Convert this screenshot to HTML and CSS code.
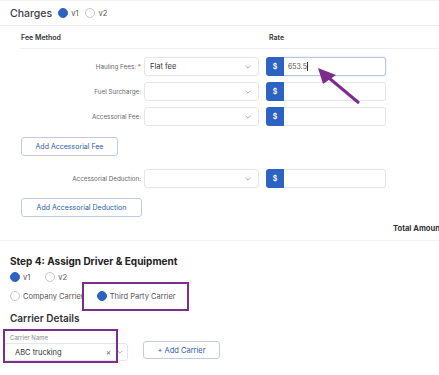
FILE: index.html
```html
<!DOCTYPE html>
<html lang="en">
<head>
    <meta charset="UTF-8">
    <meta name="viewport" content="width=device-width, initial-scale=1.0">
    <title>Load charges</title>
    <link rel="stylesheet" href="styles.css">
</head>
<body>
    <div class="page">
        <div class="charges-head">
            <span class="section-title">Charges</span>
            <label class="radio"><span class="dot on"></span>v1</label>
            <label class="radio"><span class="dot"></span>v2</label>
        </div>

        <div class="fee-head">
            <span class="col-method">Fee Method</span>
            <span class="col-rate">Rate</span>
        </div>

        <div class="fee-rows">
            <div class="fee-row">
                <span class="fee-label">Hauling Fees: <i class="req">*</i></span>
                <div class="select"><span>Flat fee</span><svg class="chev" viewBox="0 0 10 6"><path d="M1 1l4 4 4-4"/></svg></div>
                <div class="rate">
                    <span class="addon">$</span>
                    <span class="rate-input focused">653.5<span class="caret"></span></span>
                </div>
            </div>
            <div class="fee-row">
                <span class="fee-label">Fuel Surcharge:</span>
                <div class="select"><span></span><svg class="chev" viewBox="0 0 10 6"><path d="M1 1l4 4 4-4"/></svg></div>
                <div class="rate">
                    <span class="addon">$</span>
                    <span class="rate-input"></span>
                </div>
            </div>
            <div class="fee-row">
                <span class="fee-label">Accessorial Fee:</span>
                <div class="select"><span></span><svg class="chev" viewBox="0 0 10 6"><path d="M1 1l4 4 4-4"/></svg></div>
                <div class="rate">
                    <span class="addon">$</span>
                    <span class="rate-input"></span>
                </div>
            </div>
        </div>

        <button class="btn-outline btn-fee">Add Accessorial Fee</button>

        <div class="fee-row deduction">
            <span class="fee-label">Accessorial Deduction:</span>
            <div class="select"><span></span><svg class="chev" viewBox="0 0 10 6"><path d="M1 1l4 4 4-4"/></svg></div>
            <div class="rate">
                <span class="addon">$</span>
                <span class="rate-input"></span>
            </div>
        </div>

        <button class="btn-outline btn-deduction">Add Accessorial Deduction</button>

        <div class="total-row">Total Amount</div>

        <div class="step">
            <h3 class="step-title">Step 4: Assign Driver &amp; Equipment</h3>
            <div class="radio-row versions">
                <label class="radio"><span class="dot on"></span>v1</label>
                <label class="radio"><span class="dot"></span>v2</label>
            </div>
            <div class="radio-row carrier-type">
                <label class="radio"><span class="dot"></span>Company Carrier</label>
                <label class="radio third"><span class="dot on"></span>Third Party Carrier</label>
            </div>
            <h4 class="details-title">Carrier Details</h4>
            <div class="carrier-row">
                <div class="carrier-field">
                    <span class="field-label">Carrier Name</span>
                    <div class="carrier-input">
                        <span class="carrier-value">ABC trucking</span>
                        <span class="clear">×</span>
                        <svg class="chev" viewBox="0 0 10 6"><path d="M1 1l4 4 4-4"/></svg>
                    </div>
                </div>
                <button class="btn-outline btn-carrier">+ Add Carrier</button>
            </div>
        </div>

        <!-- annotation overlays -->
        <div class="mark mark-third"></div>
        <div class="mark mark-carrier"></div>
        <svg class="arrow" viewBox="0 0 439 375">
            <line x1="359" y1="103" x2="323" y2="73"/>
            <polygon points="318,68 336,75 323,84"/>
        </svg>
    </div>
</body>
</html>
```

FILE: styles.css
```css
body {
    margin: 0;
    background: #fff;
    font-family: "Inter", "DejaVu Sans", sans-serif;
    color: #333;
    overflow: hidden;
}
.page {
    position: relative;
    width: 439px;
    height: 375px;
    overflow: hidden;
}
.charges-head {
    display: flex;
    align-items: center;
    height: 26px;
    padding-left: 10px;
    border-top: 1px solid #f1f2f5;
    border-bottom: 1px solid #eceef2;
    box-sizing: border-box;
}
.section-title {
    font-size: 10.5px;
    font-weight: 500;
    color: #3a3d44;
    margin-right: 6px;
}
.radio {
    display: inline-flex;
    align-items: center;
    font-size: 7.5px;
    color: #555;
    margin-right: 7px;
}
.dot {
    width: 8px;
    height: 8px;
    border: 1px solid #c4c7cc;
    border-radius: 50%;
    margin-right: 3px;
    background: #fff;
}
.dot.on {
    background: #2c63c3;
    border-color: #2c63c3;
}
.fee-head {
    display: flex;
    align-items: center;
    height: 22px;
    margin-left: 20px;
    border-bottom: 1px solid #eceef2;
    font-size: 7px;
    font-weight: 600;
    color: #333;
}
.col-method {
    width: 248px;
    padding-left: 1px;
}
.fee-rows {
    margin-top: 8px;
    display: flex;
    flex-direction: column;
    gap: 6px;
}
.fee-row {
    display: flex;
    align-items: center;
    height: 19px;
}
.fee-label {
    width: 144px;
    padding-right: 3px;
    box-sizing: border-box;
    text-align: right;
    font-size: 6.3px;
    color: #666;
}
.req {
    font-style: normal;
    color: #d33;
}
.select {
    display: flex;
    align-items: center;
    justify-content: space-between;
    width: 115px;
    height: 19px;
    box-sizing: border-box;
    border: 1px solid #e3e6eb;
    border-radius: 3px;
    padding: 0 7px 0 5px;
    font-size: 7.5px;
    color: #333;
    margin-right: 7px;
}
.chev {
    width: 6px;
    height: 4px;
    fill: none;
    stroke: #888;
    stroke-width: 1.2;
}
.rate {
    display: flex;
    width: 120px;
    height: 19px;
}
.addon {
    width: 18px;
    background: #2c63c3;
    color: #fff;
    font-size: 7px;
    font-weight: 600;
    display: flex;
    align-items: center;
    justify-content: center;
    border-radius: 3px 0 0 3px;
}
.rate-input {
    flex: 1;
    border: 1px solid #e3e6eb;
    border-left: none;
    border-radius: 0 3px 3px 0;
    font-size: 7px;
    color: #555;
    display: flex;
    align-items: center;
    padding-left: 4px;
}
.rate-input.focused {
    border-color: #b9c6dd;
    box-shadow: 0 0 2px rgba(44, 99, 195, 0.25);
}
.caret {
    width: 1px;
    height: 9px;
    background: #333;
}
.btn-outline {
    display: block;
    font-family: inherit;
    background: #fff;
    border: 1px solid #bfcbe0;
    border-radius: 3px;
    color: #2c5aa8;
    font-size: 7px;
    padding: 0;
    height: 19px;
}
.btn-fee {
    margin: 11px 0 0 21px;
    width: 97px;
}
.deduction {
    margin-top: 13px;
}
.btn-deduction {
    margin: 10px 0 0 21px;
    width: 121px;
}
.total-row {
    margin-top: 7px;
    padding-left: 393px;
    font-size: 7.6px;
    font-weight: 700;
    white-space: nowrap;
    height: 9px;
    line-height: 9px;
}
.step {
    margin-top: 7px;
    border-top: 1px solid #f0f1f4;
    padding-left: 10px;
}
.step-title {
    margin: 14px 0 0;
    font-size: 10px;
    font-weight: 700;
    color: #222;
    line-height: 13px;
}
.radio-row {
    display: flex;
    align-items: center;
}
.versions {
    margin-top: 4px;
    height: 10px;
}
.versions .radio {
    margin-right: 15px;
}
.carrier-type {
    margin-top: 9px;
    height: 10px;
}
.carrier-type .radio {
    margin-right: 13px;
}
.details-title {
    margin: 11px 0 0;
    font-size: 10px;
    font-weight: 600;
    color: #333;
    line-height: 13px;
}
.carrier-row {
    display: flex;
    align-items: flex-end;
    margin-top: 9px;
    margin-left: -6px;
}
.carrier-field {
    display: flex;
    flex-direction: column;
}
.field-label {
    font-size: 6px;
    color: #888;
    padding-left: 6px;
    margin-bottom: 2px;
}
.carrier-input {
    display: flex;
    align-items: center;
    width: 124px;
    height: 18px;
    box-sizing: border-box;
    border: 1px solid #e3e6eb;
    border-radius: 3px;
    padding: 0 4px 0 10px;
}
.carrier-value {
    flex: 1;
    font-size: 7.5px;
    color: #333;
}
.clear {
    font-size: 8px;
    color: #666;
    margin-right: 6px;
}
.btn-carrier {
    width: 77px;
    height: 18px;
    margin: 0 0 2px 15px;
    font-size: 7.5px;
}
.mark {
    position: absolute;
    border: 2px solid #7b2e8c;
    box-sizing: border-box;
}
.mark-third {
    left: 82px;
    top: 282px;
    width: 107px;
    height: 29px;
}
.mark-carrier {
    left: 3px;
    top: 329px;
    width: 115px;
    height: 34px;
}
.arrow {
    position: absolute;
    left: 0;
    top: 0;
    width: 439px;
    height: 375px;
    pointer-events: none;
}
.arrow line {
    stroke: #7b2e8c;
    stroke-width: 3;
}
.arrow polygon {
    fill: #7b2e8c;
}
```
